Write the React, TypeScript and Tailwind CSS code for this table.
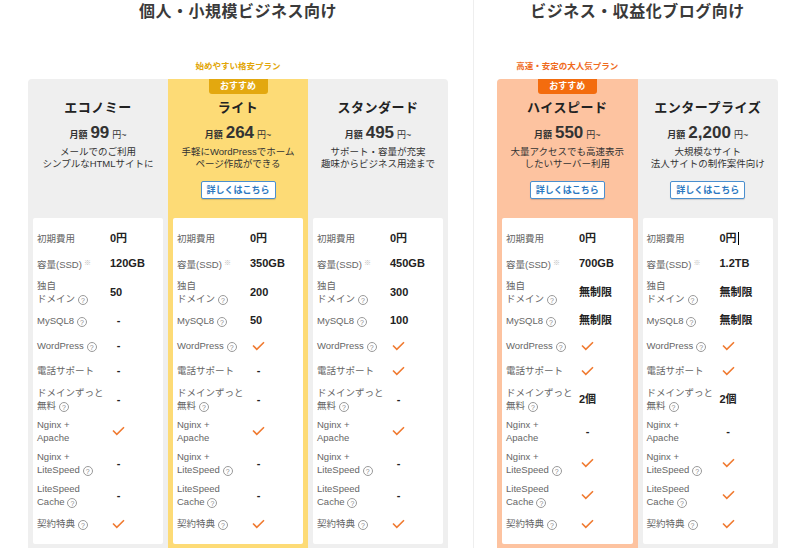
import React from 'react';

type Plan = {
    name: string;
    price: string;
    desc: [string, string];
    button: boolean;
    badge: boolean;
    values: string[];
};

type Theme = {
    col: string;
    badge: string;
};

const rows: { lines: string[]; help?: boolean; note?: boolean }[] = [
    { lines: ['初期費用'] },
    { lines: ['容量(SSD)'], note: true },
    { lines: ['独自', 'ドメイン'], help: true },
    { lines: ['MySQL8'], help: true },
    { lines: ['WordPress'], help: true },
    { lines: ['電話サポート'] },
    { lines: ['ドメインずっと', '無料'], help: true },
    { lines: ['Nginx +', 'Apache'] },
    { lines: ['Nginx +', 'LiteSpeed'], help: true },
    { lines: ['LiteSpeed', 'Cache'], help: true },
    { lines: ['契約特典'], help: true },
];

const leftPlans: Plan[] = [
    {
        name: 'エコノミー',
        price: '99',
        desc: ['メールでのご利用', 'シンプルなHTMLサイトに'],
        button: false,
        badge: false,
        values: ['0円', '120GB', '50', '-', '-', '-', '-', 'ok', '-', '-', 'ok'],
    },
    {
        name: 'ライト',
        price: '264',
        desc: ['手軽にWordPressでホーム', 'ページ作成ができる'],
        button: true,
        badge: true,
        values: ['0円', '350GB', '200', '50', 'ok', '-', '-', 'ok', '-', '-', 'ok'],
    },
    {
        name: 'スタンダード',
        price: '495',
        desc: ['サポート・容量が充実', '趣味からビジネス用途まで'],
        button: false,
        badge: false,
        values: ['0円', '450GB', '300', '100', 'ok', 'ok', '-', 'ok', '-', '-', 'ok'],
    },
];

const rightPlans: Plan[] = [
    {
        name: 'ハイスピード',
        price: '550',
        desc: ['大量アクセスでも高速表示', 'したいサーバー利用'],
        button: true,
        badge: true,
        values: ['0円', '700GB', '無制限', '無制限', 'ok', 'ok', '2個', '-', 'ok', 'ok', 'ok'],
    },
    {
        name: 'エンタープライズ',
        price: '2,200',
        desc: ['大規模なサイト', '法人サイトの制作案件向け'],
        button: true,
        badge: false,
        values: ['0円|', '1.2TB', '無制限', '無制限', 'ok', 'ok', '2個', '-', 'ok', 'ok', 'ok'],
    },
];

const Help: React.FC = () => (
    <span className="inline-flex w-[10px] h-[10px] ml-[3px] rounded-full border border-[#9a9a9a] text-[#8a8a8a] text-[7px] leading-none items-center justify-center align-[-1px]">
        ?
    </span>
);

const Check: React.FC = () => (
    <svg width="13" height="10" viewBox="0 0 13 10" className="block">
        <path d="M1 4.5 L4.8 8.3 L12 1.2" fill="none" stroke="#f07a30" strokeWidth="1.6" />
    </svg>
);

const Value: React.FC<{ v: string }> = ({ v }) => {
    if (v === 'ok') {
        return (
            <div className="w-[17px] flex justify-center">
                <Check />
            </div>
        );
    }
    if (v === '-') {
        return <div className="w-[17px] text-center text-[11px] font-bold text-[#222]">-</div>;
    }
    // 0円| : screenshot has a text caret after the value
    if (v.endsWith('|')) {
        return (
            <div className="flex items-center text-[11px] font-bold text-[#222]">
                {v.slice(0, -1)}
                <span className="w-px h-[13px] bg-black ml-px" />
            </div>
        );
    }
    return <div className="text-[11px] font-bold text-[#222]">{v}</div>;
};

const PlanColumn: React.FC<{ plan: Plan; theme: Theme; featured: boolean }> = ({ plan, theme, featured }) => (
    <div className={`flex flex-col ${featured ? theme.col : ''}`}>
        <div className="h-[139px] flex flex-col items-center">
            <div className={`h-[15px] w-[59px] rounded-b-[3px] text-white text-[9px] font-bold leading-[15px] text-center ${plan.badge ? theme.badge : 'invisible'}`}>
                おすすめ
            </div>
            <div className="mt-[4px] text-[13px] leading-[20px] font-bold tracking-[0.5px] text-[#222]">{plan.name}</div>
            <div className="mt-[4px] h-[22px] flex items-baseline text-[#333]">
                <span className="text-[9px] font-bold">月額</span>
                <span className="text-[17px] font-bold mx-[3px] leading-[22px]">{plan.price}</span>
                <span className="text-[9px]">円~</span>
            </div>
            <div className="mt-[2px] text-[9.5px] leading-[12px] text-[#333] text-center">
                <div>{plan.desc[0]}</div>
                <div>{plan.desc[1]}</div>
            </div>
            {plan.button && (
                <div className="mt-[11px] w-[75px] h-[18px] bg-white border border-[#4a8fcf] rounded-[2px] shadow-[0_1px_1px_rgba(0,0,0,0.15)] text-[9px] font-bold text-[#2a77c0] leading-[16px] text-center">
                    詳しくはこちら
                </div>
            )}
        </div>
        <div className="px-[5px] pb-[4px]">
            <div className="bg-white rounded-[2px] pt-[8px] pb-[8px] pl-[4px]">
                {rows.map((r, i) => (
                    <div key={i} className={`flex items-center ${r.lines.length > 1 ? 'h-[32px]' : 'h-[25px]'}`}>
                        <div className="w-[73px] text-[9.5px] leading-[13px] text-[#666]">
                            {r.lines.map((l, j) => (
                                <div key={j}>
                                    {l}
                                    {j === r.lines.length - 1 && r.help && <Help />}
                                    {r.note && <span className="text-[7px] text-[#bbb] align-[3px] ml-[2px]">※</span>}
                                </div>
                            ))}
                        </div>
                        <Value v={plan.values[i]} />
                    </div>
                ))}
            </div>
        </div>
    </div>
);

const Section: React.FC<{
    title: string;
    tag: string;
    tagColor: string;
    plans: Plan[];
    featured: number;
    theme: Theme;
    className: string;
}> = ({ title, tag, tagColor, plans, featured, theme, className }) => (
    <div className={className}>
        <div className="pt-[2px] text-center text-[16px] leading-[20px] tracking-[0.5px] font-bold text-[#3a3a3a]">{title}</div>
        <div className={`mt-[38px] grid ${plans.length === 3 ? 'grid-cols-3' : 'grid-cols-2'}`}>
            {plans.map((p, i) => (
                <div key={i} className={`h-[12px] text-center text-[8.5px] leading-[12px] font-bold ${tagColor}`}>
                    {i === featured ? tag : ''}
                </div>
            ))}
        </div>
        <div className={`mt-[7px] grid bg-[#efefef] rounded-t-[4px] overflow-hidden ${plans.length === 3 ? 'grid-cols-3' : 'grid-cols-2'}`}>
            {plans.map((p, i) => (
                <PlanColumn key={i} plan={p} theme={theme} featured={i === featured} />
            ))}
        </div>
    </div>
);

const App: React.FC = () => {
    return (
        <div
            className="w-[800px] h-[548px] overflow-hidden bg-white flex"
            style={{ fontFamily: '"Liberation Sans", "Noto Sans CJK JP", sans-serif' }}
        >
            <div className="w-[474px] border-r border-[#eeeeee]">
                <Section
                    className="ml-[28px] w-[420px]"
                    title="個人・小規模ビジネス向け"
                    tag="始めやすい格安プラン"
                    tagColor="text-[#e2a60a]"
                    plans={leftPlans}
                    featured={1}
                    theme={{ col: 'bg-[#fddb76]', badge: 'bg-[#e3a80f]' }}
                />
            </div>
            <div className="flex-1">
                <Section
                    className="ml-[23px] w-[281px]"
                    title="ビジネス・収益化ブログ向け"
                    tag="高速・安定の大人気プラン"
                    tagColor="text-[#ef6a1c]"
                    plans={rightPlans}
                    featured={0}
                    theme={{ col: 'bg-[#fdc3a0]', badge: 'bg-[#f36c0e]' }}
                />
            </div>
        </div>
    );
};

export default App;
